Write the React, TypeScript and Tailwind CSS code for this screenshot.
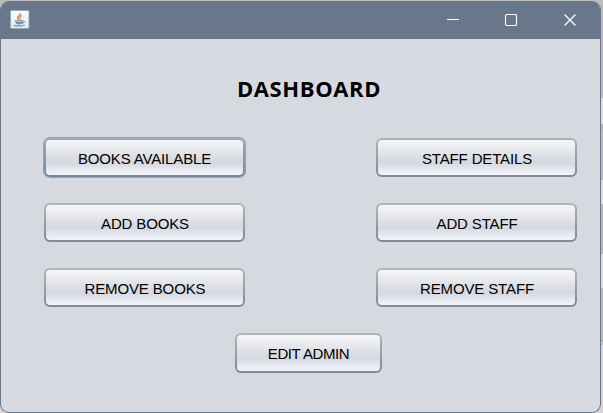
import React from "react";
import clsx from "clsx";

function JavaIcon() {
  return (
    <svg width="20" height="20" viewBox="0 0 20 20" fill="none">
      <defs>
        <linearGradient id="tile" x1="0" y1="0" x2="0" y2="1">
          <stop offset="0" stopColor="#ffffff" />
          <stop offset="1" stopColor="#e3e8ec" />
        </linearGradient>
      </defs>
      <rect x="0.5" y="0.5" width="18.5" height="18" rx="1" fill="url(#tile)" stroke="#8fa9bd" />
      <path d="M10.200 3.200c1.200 2-3.200 2.800-2.400 4.600.3.900 1 1.400 1.500 2" stroke="#e5843f" strokeWidth="1.700" />
      <path d="M12 5.600c-2.600.9-2.700 1.600-1.700 2.600.5.700.1 1.300-.4 1.800" stroke="#eb9455" strokeWidth="1.300" />
      <path d="M5 10.900h7.500M5.800 11.400c.3 2.500 1.300 2.500 3.300 2.500s3-.1 3.300-2.500M6.200 12.700h5.800" stroke="#7192a9" strokeWidth="1.200" />
      <path d="M12.700 10.900c2.500-.5 2.300 2-.5 2.300" stroke="#55809f" strokeWidth="1" />
      <path d="M4 14.800c-.5 1.500 9.500 1.600 10.800-.1" stroke="#7598b1" strokeWidth="1.200" />
    </svg>
  );
}

function ActionButton({ label, focused = false, small = false }: { label: string; focused?: boolean; small?: boolean }) {
  return (
    <button
      className={clsx(
        "block rounded-[6px] bg-linear-to-b p-[2px]",
        small ? "h-10 w-[147px] tracking-[-0.42px]" : "h-[39px] w-[201px] tracking-[-0.14px]",
        focused
          ? "from-[#9aacbe] to-[#73889d] shadow-[0_0_0_1px_#84a6c7]"
          : "from-[#b1b5ba] to-[#85898f]",
      )}
    >
      <span
        className={clsx(
          "flex h-full w-full items-center justify-center rounded-[4px] bg-[linear-gradient(to_bottom,#f5f6f8_0%,#e7e9ec_28%,#d7dae0_58%,#d7dae1_68%,#e9ecf4_88%,#f3f5fc_100%)] pt-px text-[15px] leading-none whitespace-nowrap text-black",
          !focused && !small && "pl-px",
        )}
      >
        {label}
      </span>
    </button>
  );
}

export default function App() {
  return (
    <div className="h-[413px] w-[603px] overflow-hidden bg-[linear-gradient(to_bottom,#bcbcbc_0px,#bcbcbc_98px,#deded9_98px,#deded9_124px,#b0b0ad_124px,#bcbcbc_132px,#bcbcbc_180px,#deded9_180px,#deded9_204px,#b8b8b7_204px,#b8b8b7_254px,#deded9_254px,#deded9_288px,#bcbcbb_288px,#bcbcbb_340px,#d49b43_340px,#d49b43_341px,#bfc0d0_341px,#bfc0d0_345px,#d6d5d2_345px)] pt-px font-['Liberation_Sans',Arial,sans-serif]">
      <div className="flex h-[412px] w-[601px] flex-col overflow-hidden rounded-[9px] border border-t-0 border-[#687789] bg-[#d6d9e0]">
        <header className="flex h-[38px] shrink-0 items-center justify-between bg-[#687789] pr-[22px] pl-[9px]">
          <JavaIcon />
          <svg width="132" height="14" viewBox="0 0 132 14" fill="none" stroke="white">
            <path d="M1 6.500h12" />
            <rect x="59.500" y="1.500" width="11" height="11" rx="1.200" strokeWidth="1.150" />
            <path d="m118.500 1.500 11 11m0-11-11 11" strokeWidth="1.200" />
          </svg>
        </header>
        <main className="flex flex-col items-center">
          <h1 className="mt-[34px] h-[30px] pl-[17px] font-['Open_Sans','Noto_Sans',sans-serif] text-[22px] leading-[30px] font-bold tracking-[0.600px] text-black">
            DASHBOARD
          </h1>
          <div className="mt-[35px] grid grid-cols-[201px_201px] gap-x-[131px] gap-y-[26px] self-start pl-[43px]">
            <ActionButton label="BOOKS AVAILABLE" focused />
            <ActionButton label="STAFF DETAILS" />
            <ActionButton label="ADD BOOKS" />
            <ActionButton label="ADD STAFF" />
            <ActionButton label="REMOVE BOOKS" />
            <ActionButton label="REMOVE STAFF" />
          </div>
          <div className="mt-[26px] self-start pl-[234px]">
            <ActionButton label="EDIT ADMIN" small />
          </div>
        </main>
      </div>
    </div>
  );
}
